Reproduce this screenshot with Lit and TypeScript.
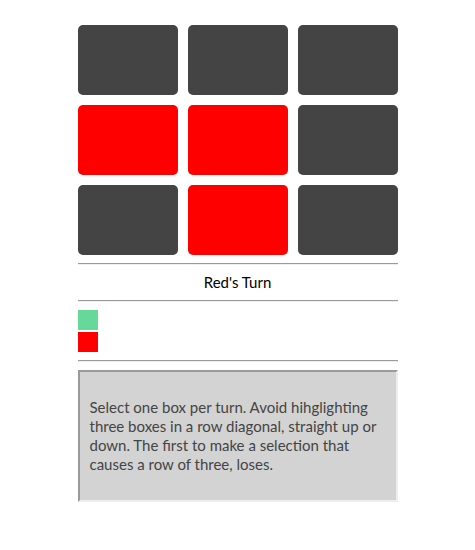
import { LitElement, html, css } from "lit";
import { customElement, state } from "lit/decorators.js";
import { classMap } from "lit/directives/class-map.js";

type Owner = "none" | "red" | "green";

@customElement("app-root")
export class AppRoot extends LitElement {
  static styles = css`
    :host {
      display: block;
      font-family: Lato, "Noto Sans", sans-serif;
      font-size: 15px;
      line-height: 19px;
      color: #000;
    }
    .game {
      box-sizing: border-box;
      width: 100%;
      max-width: 340px;
      margin: 0 auto;
      padding: 25px 10px;
    }
    .board {
      display: grid;
      grid-template-columns: repeat(3, 1fr);
      gap: 10px;
    }
    .box {
      height: 70px;
      padding: 0;
      border: 0;
      border-radius: 5px;
      background: #444;
      cursor: pointer;
    }
    .box.red {
      background: #f00;
    }
    .box.green {
      background: #66d89a;
    }
    .rule {
      height: 0;
      margin: 8px 0;
      border: 0;
      border-top: 1px solid #9a9a9a;
      border-bottom: 1px solid #eee;
    }
    .turn {
      margin: 0;
      text-align: center;
    }
    .players {
      display: grid;
      gap: 2px;
    }
    .swatch {
      width: 20px;
      height: 20px;
      background: #66d89a;
    }
    .swatch.red {
      background: #f00;
    }
    .help {
      padding: 26px 10px;
      border: 2px solid;
      border-color: #9a9a9a #eee #eee #9a9a9a;
      background: #d3d3d3;
      color: #444;
    }
    .help p {
      margin: 0;
    }
  `;

  @state() private turn: "red" | "green" = "red";
  @state() private boxes: Owner[] = [
    "none", "none", "none",
    "red", "red", "none",
    "none", "red", "none",
  ];

  private pick(index: number) {
    if (this.boxes[index] !== "none") return;
    this.boxes = this.boxes.map((b, i) => (i === index ? this.turn : b));
    this.turn = this.turn === "red" ? "green" : "red";
  }

  render() {
    return html`
      <main class="game">
        <div class="board">
          ${this.boxes.map(
            (owner, i) => html`<button
              type="button"
              class=${classMap({ box: true, red: owner === "red", green: owner === "green" })}
              aria-label="Box ${i + 1}"
              @click=${() => this.pick(i)}
            ></button>`
          )}
        </div>
        <hr class="rule" />
        <p class="turn">${this.turn === "red" ? "Red's Turn" : "Green's Turn"}</p>
        <hr class="rule" />
        <div class="players">
          <div class="swatch"></div>
          <div class="swatch red"></div>
        </div>
        <hr class="rule" />
        <section class="help">
          <p>
            Select one box per turn. Avoid hihglighting three boxes in a row diagonal,
            straight up or down. The first to make a selection that causes a row of three,
            loses.
          </p>
        </section>
      </main>
    `;
  }
}
